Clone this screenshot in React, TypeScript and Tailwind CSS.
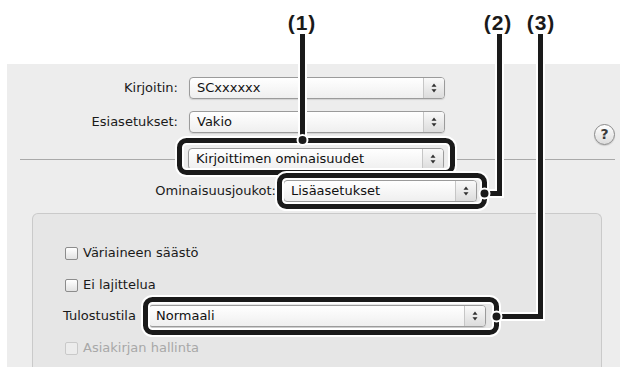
import React from "react";

function Arrows() {
  return (
    <svg width="6" height="10" viewBox="0 0 6 10">
      <path d="M3 0.5L5.5 3.8H0.5Z" fill="#2f2f2f" />
      <path d="M3 9.5L5.5 6.2H0.5Z" fill="#2f2f2f" />
    </svg>
  );
}

function Popup({ value, className }: { value: string; className: string }) {
  return (
    <div
      className={`flex h-[22px] shrink-0 overflow-hidden rounded-[4px] border border-[#9b9b9b] bg-linear-to-b from-white to-[#efefef] shadow-[0_1px_1px_rgba(0,0,0,0.12)] ${className}`}
    >
      <span className="flex-1 truncate pl-[7px] text-[13px] leading-[20px] text-[#111]">
        {value}
      </span>
      <span className="flex w-[21px] items-center justify-center border-l border-[#c6c6c6] bg-linear-to-b from-[#f9f9f9] to-[#dcdcdc]">
        <Arrows />
      </span>
    </div>
  );
}

function Check({ label, disabled }: { label: string; disabled?: boolean }) {
  return (
    <div className="flex h-[20px] items-center">
      <span
        className={`h-[13px] w-[13px] shrink-0 rounded-[2px] border ${
          disabled
            ? "border-[#c9c9c9] bg-[#ececec]"
            : "border-[#8c8c8c] bg-linear-to-b from-white to-[#e2e2e2]"
        }`}
      />
      <span
        className={`ml-[5px] text-[13px] ${disabled ? "text-[#a8a8a8]" : "text-[#1a1a1a]"}`}
      >
        {label}
      </span>
    </div>
  );
}

export default function App() {
  return (
    <div className="relative h-[367px] w-[625px] overflow-hidden bg-white font-['DejaVu_Sans',sans-serif]">
      {/* Print dialog */}
      <div className="ml-[7px] mt-[64px] flex h-[303px] w-[613px] flex-col bg-[#ededed] text-[13px] text-[#1a1a1a]">
        <div className="mt-[13px] flex h-[22px] items-center">
          <span className="w-[171px] text-right">Kirjoitin:</span>
          <Popup value="SCxxxxxx" className="ml-[11px] w-[256px]" />
        </div>

        <div className="mt-[12px] flex h-[22px] items-center">
          <span className="w-[171px] text-right">Esiasetukset:</span>
          <Popup value="Vakio" className="ml-[11px] w-[256px]" />
          <span className="ml-auto mr-[5px] mt-[13px] flex h-[21px] w-[21px] items-center justify-center self-start rounded-full border border-[#8a8a8a] bg-linear-to-b from-white to-[#dcdcdc] text-[14px] font-bold text-[#3a3a3a] shadow-[0_1px_1px_rgba(0,0,0,0.15)]">
            ?
          </span>
        </div>

        <div className="mt-[15px] flex h-[22px] items-center">
          <span className="ml-[13px] h-px w-[164px] bg-[#a9a9a9]" />
          <Popup value="Kirjoittimen ominaisuudet" className="ml-[4px] w-[256px]" />
          <span className="ml-[4px] mr-[5px] h-px flex-1 bg-[#a9a9a9]" />
        </div>

        <div className="mt-[10px] flex h-[22px] items-center">
          <span className="w-[269px] text-right">Ominaisuusjoukot:</span>
          <Popup value="Lisäasetukset" className="ml-[7px] w-[194px]" />
        </div>

        <div className="ml-[25px] mr-[18px] mt-[11px] flex-1 rounded-t-[6px] border border-b-0 border-[#cacaca] bg-[#e6e6e6] pl-[32px] pt-[29px]">
          <Check label="Väriaineen säästö" />
          <div className="mt-[12px]">
            <Check label="Ei lajittelua" />
          </div>
          <div className="-ml-[2px] mt-[10px] flex h-[22px] items-center">
            <span>Tulostustila</span>
            <Popup value="Normaali" className="ml-[12px] w-[338px]" />
          </div>
          <div className="mt-[11px]">
            <Check label="Asiakirjan hallinta" disabled />
          </div>
        </div>
      </div>

      {/* Callout labels */}
      <div className="absolute left-[282px] top-[12px] w-[40px] text-center font-['Liberation_Sans',sans-serif] text-[21px] font-bold leading-[21px] tracking-[1px] text-[#1a1a1a]">
        (1)
      </div>
      <div className="absolute left-[478px] top-[12px] w-[40px] text-center font-['Liberation_Sans',sans-serif] text-[21px] font-bold leading-[21px] tracking-[1px] text-[#1a1a1a]">
        (2)
      </div>
      <div className="absolute left-[521px] top-[12px] w-[40px] text-center font-['Liberation_Sans',sans-serif] text-[21px] font-bold leading-[21px] tracking-[1px] text-[#1a1a1a]">
        (3)
      </div>

      {/* Callout lines and frames */}
      <svg
        className="pointer-events-none absolute left-0 top-0"
        width="625"
        height="367"
        viewBox="0 0 625 367"
      >
        <g fill="none" stroke="#fff" strokeWidth="9">
          <path d="M302.5 36V140" />
          <path d="M499.5 36V193.5H484" />
          <path d="M540.5 36V316.5H496" />
        </g>
        <g fill="none" stroke="#1a1a1a" strokeWidth="5">
          <path d="M302.5 34V140" />
          <path d="M499.5 34V193.5H484" />
          <path d="M540.5 34V316.5H496" />
        </g>
        <rect x="179.5" y="140.5" width="273" height="32" rx="7" fill="none" stroke="#fff" strokeWidth="9" />
        <rect x="179.5" y="140.5" width="273" height="32" rx="7" fill="none" stroke="#1a1a1a" strokeWidth="5" />
        <rect x="279.5" y="175.5" width="205" height="31" rx="7" fill="none" stroke="#fff" strokeWidth="9" />
        <rect x="279.5" y="175.5" width="205" height="31" rx="7" fill="none" stroke="#1a1a1a" strokeWidth="5" />
        <rect x="145.5" y="299.5" width="351" height="33" rx="7" fill="none" stroke="#fff" strokeWidth="9" />
        <rect x="145.5" y="299.5" width="351" height="33" rx="7" fill="none" stroke="#1a1a1a" strokeWidth="5" />
        <circle cx="302.5" cy="140" r="5" fill="#1a1a1a" stroke="#fff" strokeWidth="2" />
        <circle cx="484.5" cy="193.5" r="5" fill="#1a1a1a" stroke="#fff" strokeWidth="2" />
        <circle cx="496.5" cy="316.5" r="5" fill="#1a1a1a" stroke="#fff" strokeWidth="2" />
      </svg>
    </div>
  );
}
